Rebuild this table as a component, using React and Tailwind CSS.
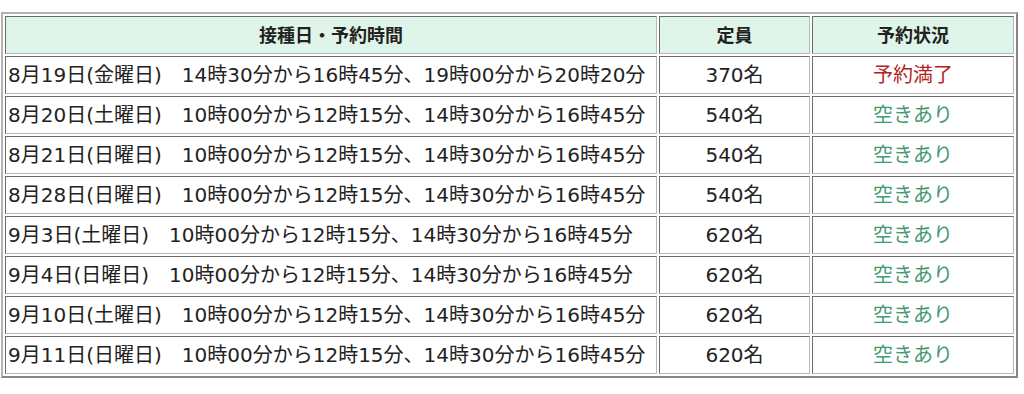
import React from "react";

const rows = [
  { date: "8月19日(金曜日)", time: "14時30分から16時45分、19時00分から20時20分", cap: "370名", full: true },
  { date: "8月20日(土曜日)", time: "10時00分から12時15分、14時30分から16時45分", cap: "540名" },
  { date: "8月21日(日曜日)", time: "10時00分から12時15分、14時30分から16時45分", cap: "540名" },
  { date: "8月28日(日曜日)", time: "10時00分から12時15分、14時30分から16時45分", cap: "540名" },
  { date: "9月3日(土曜日)", time: "10時00分から12時15分、14時30分から16時45分", cap: "620名" },
  { date: "9月4日(日曜日)", time: "10時00分から12時15分、14時30分から16時45分", cap: "620名" },
  { date: "9月10日(土曜日)", time: "10時00分から12時15分、14時30分から16時45分", cap: "620名" },
  { date: "9月11日(日曜日)", time: "10時00分から12時15分、14時30分から16時45分", cap: "620名" },
];

const cell =
  "h-[38px] p-0 border border-t-[#6b6b6b] border-l-[#6b6b6b] border-b-[#b8b8b8] border-r-[#b8b8b8]";

const App = () => {
  return (
    <div className="w-[1024px] h-[394px] bg-white pt-3 pl-px font-['DejaVu_Sans','Noto_Sans_CJK_JP',sans-serif] text-[#222]">
      <table className="w-[1017px] border-separate border-spacing-[2px] border-2 border-t-[#b4b4b4] border-l-[#b4b4b4] border-b-[#858585] border-r-[#858585]">
        <thead>
          <tr className="bg-[#e0f5e9] text-[18px] font-bold">
            <th className={`${cell} w-[652px] text-center`}>接種日・予約時間</th>
            <th className={`${cell} w-[151px] text-center`}>定員</th>
            <th className={`${cell} text-center`}>予約状況</th>
          </tr>
        </thead>
        <tbody>
          {rows.map((r) => (
            <tr key={r.date} className="text-[20px]">
              <td className={`${cell} pl-[2px] text-left whitespace-nowrap`}>
                {r.date}　{r.time}
              </td>
              <td className={`${cell} text-center`}>{r.cap}</td>
              <td
                className={`${cell} text-center ${
                  r.full ? "text-[#b22222]" : "text-[#449a70]"
                }`}
              >
                {r.full ? "予約満了" : "空きあり"}
              </td>
            </tr>
          ))}
        </tbody>
      </table>
    </div>
  );
};

export default App;
